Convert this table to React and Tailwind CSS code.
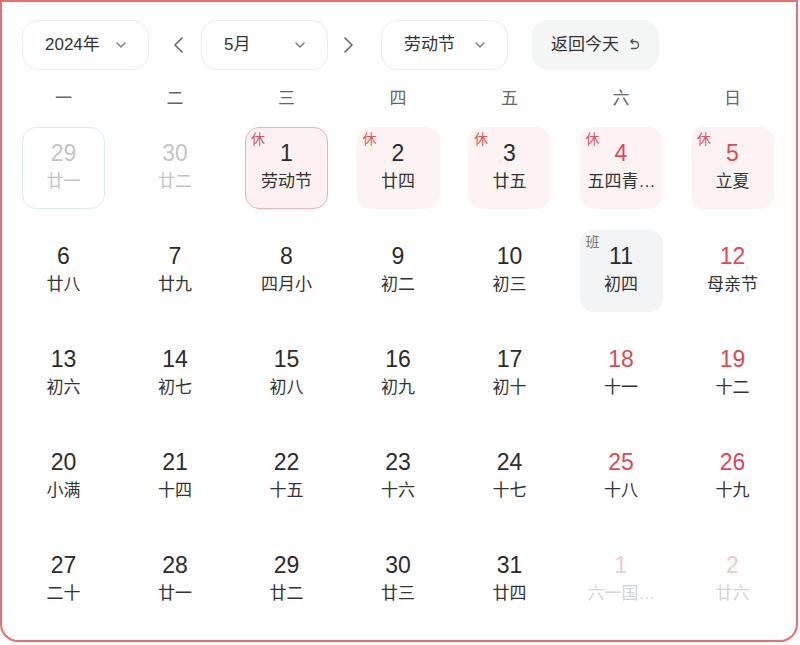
import React from "react";

const FONT = { fontFamily: '"Liberation Sans", "Noto Sans CJK SC", sans-serif' };

function Chevron({ className = "" }) {
  return (
    <svg className={className} width="14" height="14" viewBox="0 0 14 14" fill="none">
      <path d="M3 5l4 4 4-4" stroke="#777" strokeWidth="1.4" strokeLinecap="round" strokeLinejoin="round" />
    </svg>
  );
}

function Arrow({ dir }) {
  return (
    <svg width="16" height="22" viewBox="0 0 16 22" fill="none">
      <path
        d={dir === "left" ? "M11 4L4 11l7 7" : "M5 4l7 7-7 7"}
        stroke="#666"
        strokeWidth="1.6"
        strokeLinecap="round"
        strokeLinejoin="round"
      />
    </svg>
  );
}

function Select({ label }) {
  return (
    <div className="flex h-[50px] w-[127px] items-center justify-between rounded-[16px] border border-[#ededed] bg-white pl-[22px] pr-[20px] text-[17px] text-[#333]">
      <span>{label}</span>
      <Chevron />
    </div>
  );
}

const weeks = ["一", "二", "三", "四", "五", "六", "日"];

const days = [
  { d: "29", l: "廿一", type: "prev", box: "prevbox" },
  { d: "30", l: "廿二", type: "prev" },
  { d: "1", l: "劳动节", tag: "休", box: "today" },
  { d: "2", l: "廿四", tag: "休", box: "holiday" },
  { d: "3", l: "廿五", tag: "休", box: "holiday" },
  { d: "4", l: "五四青", ell: true, tag: "休", box: "holiday", red: true },
  { d: "5", l: "立夏", tag: "休", box: "holiday", red: true },
  { d: "6", l: "廿八" },
  { d: "7", l: "廿九" },
  { d: "8", l: "四月小" },
  { d: "9", l: "初二" },
  { d: "10", l: "初三" },
  { d: "11", l: "初四", tag: "班", box: "work" },
  { d: "12", l: "母亲节", red: true },
  { d: "13", l: "初六" },
  { d: "14", l: "初七" },
  { d: "15", l: "初八" },
  { d: "16", l: "初九" },
  { d: "17", l: "初十" },
  { d: "18", l: "十一", red: true },
  { d: "19", l: "十二", red: true },
  { d: "20", l: "小满" },
  { d: "21", l: "十四" },
  { d: "22", l: "十五" },
  { d: "23", l: "十六" },
  { d: "24", l: "十七" },
  { d: "25", l: "十八", red: true },
  { d: "26", l: "十九", red: true },
  { d: "27", l: "二十" },
  { d: "28", l: "廿一" },
  { d: "29", l: "廿二" },
  { d: "30", l: "廿三" },
  { d: "31", l: "廿四" },
  { d: "1", l: "六一国", ell: true, type: "next" },
  { d: "2", l: "廿六", type: "next" },
];

function Cell({ c }) {
  let boxCls = "border border-transparent";
  if (c.box === "today") boxCls = "border border-[#efb3b7] bg-[#fdf1f1]";
  else if (c.box === "holiday") boxCls = "border border-transparent bg-[#fef3f3]";
  else if (c.box === "work") boxCls = "border border-transparent bg-[#f2f4f6]";
  else if (c.box === "prevbox") boxCls = "border border-[#deeceb] bg-white";

  let numCls = "text-[#2b2b2b]";
  let lunCls = "text-[#333]";
  if (c.type === "prev") {
    numCls = "text-[#c4c4c4]";
    lunCls = "text-[#c4c4c4]";
  } else if (c.type === "next") {
    numCls = "text-[#f5c6cb]";
    lunCls = "text-[#d4d4d4]";
  } else if (c.red) {
    numCls = "text-[#dc4a52]";
  }

  return (
    <div className={`relative flex h-[82px] flex-col items-center rounded-[14px] pt-[13px] ${boxCls}`}>
      {c.tag && (
        <span
          className={`absolute left-[5px] top-[2px] text-[14px] leading-[18px] ${
            c.tag === "休" ? "text-[#e0555c]" : "text-[#777]"
          }`}
        >
          {c.tag}
        </span>
      )}
      <span className={`text-[23px] leading-[24px] ${numCls}`}>{c.d}</span>
      <span className={`mt-[6px] whitespace-nowrap text-[17px] leading-[22px] ${lunCls}`}>
        {c.l}
        {c.ell && <span className="tracking-[-1px]">…</span>}
      </span>
    </div>
  );
}

export default function App() {
  return (
    <div className="h-[645px] w-[800px] bg-white" style={FONT}>
      <div className="h-[642px] w-[798px] rounded-b-[18px] border-2 border-[#ec6d72] bg-white">
        <div className="flex items-center pl-[20px] pt-[18px]">
          <Select label="2024年" />
          <div className="ml-[22px] mr-[14px] flex w-[16px] justify-center">
            <Arrow dir="left" />
          </div>
          <Select label="5月" />
          <div className="ml-[12px] mr-[25px] flex w-[16px] justify-center">
            <Arrow dir="right" />
          </div>
          <Select label="劳动节" />
          <div className="ml-[24px] flex h-[50px] w-[127px] items-center justify-center gap-[9px] rounded-[16px] bg-[#f4f5f5] text-[17px] text-[#333]">
            <span>返回今天</span>
            <svg width="12" height="14" viewBox="0 0 12 14" fill="none">
              <path
                d="M3 3.5h4a3.5 3.5 0 010 7H3.5"
                stroke="#555"
                strokeWidth="1.3"
                strokeLinecap="round"
              />
              <path d="M4.8 1.5L2.8 3.5l2 2" stroke="#555" strokeWidth="1.3" strokeLinecap="round" strokeLinejoin="round" />
            </svg>
          </div>
        </div>

        <div className="ml-[20px] mt-[18px] grid w-[752px] grid-cols-7 gap-x-[28.5px]">
          {weeks.map((w) => (
            <div key={w} className="text-center text-[17px] leading-[22px] text-[#666]">
              {w}
            </div>
          ))}
        </div>

        <div className="ml-[20px] mt-[17px] grid w-[752px] grid-cols-7 gap-x-[28.5px] gap-y-[21px]">
          {days.map((c, i) => (
            <Cell key={i} c={c} />
          ))}
        </div>
      </div>
    </div>
  );
}
